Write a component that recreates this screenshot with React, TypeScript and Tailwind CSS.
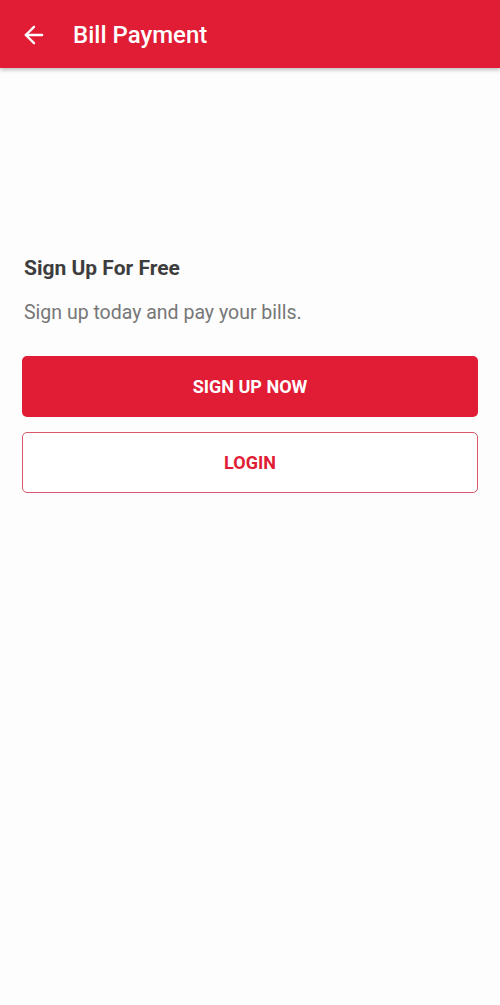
import { ArrowLeft } from "lucide-react";

export default function App() {
  return (
    <div className="min-h-[1005px] w-[500px] bg-[#fdfdfd] font-['Roboto',sans-serif]">
      {/* top bar */}
      <div className="flex h-[68px] items-center bg-[#e11c35] shadow-[0_2px_4px_rgba(0,0,0,0.25)]">
        <ArrowLeft className="ml-[20px] mt-[1px] h-[28px] w-[28px] text-white" strokeWidth={2} />
        <h1 className="ml-[25px] mt-[2px] text-[24px] font-medium text-white">Bill Payment</h1>
      </div>

      {/* sign up section */}
      <div className="px-[22px] pt-[185px]">
        <h2 className="pl-[2px] text-[21px] font-bold leading-[30px] text-[#3d3d3d]">Sign Up For Free</h2>
        <p className="mt-[17px] pl-[2px] text-[19.5px] leading-[26px] text-[#777777]">
          Sign up today and pay your bills.
        </p>
        <button className="mt-[30px] flex h-[61px] w-full items-center justify-center rounded-[5px] bg-[#e11c35] text-[18px] font-bold text-white">
          SIGN UP NOW
        </button>
        <button className="mt-[15px] flex h-[61px] w-full items-center justify-center rounded-[5px] border border-[#d9596a] bg-white text-[18px] font-bold text-[#e11c35]">
          LOGIN
        </button>
      </div>
    </div>
  );
}
